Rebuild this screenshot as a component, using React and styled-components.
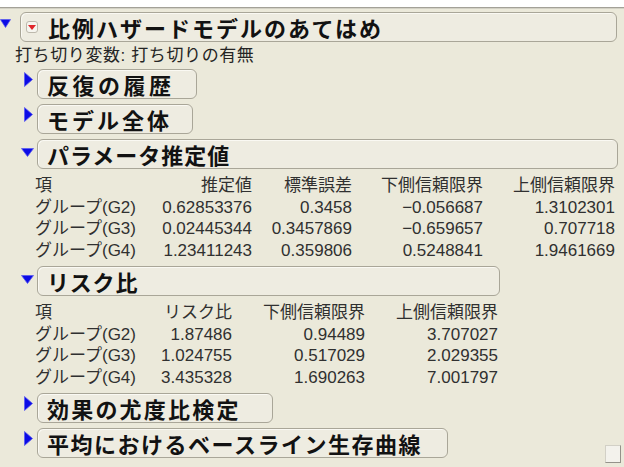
import React from "react";
import styled, { createGlobalStyle } from "styled-components";

const GlobalStyle = createGlobalStyle`
  html, body {
    margin: 0;
    padding: 0;
    background: #ebe9da;
  }
  body {
    font-family: "Noto Sans CJK JP", "Noto Sans", sans-serif;
    color: #2b2b2b;
  }
`;

const Window = styled.div`
  position: relative;
  min-height: 100vh;
  background: #ebe9da;
  overflow: hidden;
`;

const TopStrip = styled.div`
  height: 7px;
  background: #ffffff;
  border-bottom: 1px solid #a3a198;
  box-shadow: 0 1px 0 #d3d1c5;
`;

const Report = styled.div`
  padding-top: 4px;
`;

const Body = styled.div`
  padding-left: 15px;
`;

const OutlineRow = styled.div`
  display: flex;
  align-items: flex-start;
  margin-top: ${(p) => p.$gap}px;
  margin-left: ${(p) => p.$indent}px;
`;

const Toggle = styled.div`
  flex: none;
  width: 20px;
  height: 30px;
  box-sizing: border-box;
  display: flex;
  justify-content: ${(p) => (p.$edge ? "flex-start" : "center")};
  align-items: flex-start;
  padding-top: ${(p) => p.$top}px;
  padding-left: ${(p) => p.$left}px;
`;

const TitleBox = styled.div`
  box-sizing: border-box;
  width: ${(p) => p.$w}px;
  height: 30px;
  display: flex;
  align-items: center;
  gap: 10px;
  padding-left: ${(p) => p.$pad}px;
  border: 1px solid #a9a698;
  border-radius: 6px;
  background: #eeece1;
  box-shadow: inset 1px 1px 0 #faf9f3;
`;

const TitleText = styled.span`
  font-size: 22px;
  line-height: 1;
  font-weight: 700;
  letter-spacing: ${(p) => p.$ls ?? 1.6}px;
  color: #121212;
  white-space: nowrap;
`;

const MenuButton = styled.span`
  flex: none;
  width: 12px;
  height: 12px;
  box-sizing: border-box;
  border: 1px solid #bdb9ad;
  border-radius: 3px;
  background: #f6f5ef;
  display: flex;
  align-items: center;
  justify-content: center;
`;

const Subtitle = styled.div`
  margin-top: 4px;
  font-family: "Liberation Sans", "Noto Sans CJK JP", sans-serif;
  font-size: 17px;
  line-height: 20px;
  letter-spacing: 0.6px;
  color: #242424;
  white-space: nowrap;
`;

const Table = styled.div`
  display: grid;
  grid-template-columns: ${(p) => p.$cols};
  margin: 6px 0 0 20px;
  font-family: "Liberation Sans", "Noto Sans CJK JP", sans-serif;
  font-size: 17px;
  line-height: 21.5px;
  color: #303030;
`;

const Cell = styled.div`
  text-align: ${(p) => (p.$left ? "left" : "right")};
  white-space: nowrap;
`;

const SizeGrip = styled.div`
  position: absolute;
  right: 3px;
  bottom: 4px;
  width: 16px;
  height: 18px;
  box-sizing: border-box;
  background: #f3f2ec;
  border: 1px solid #d2d0c6;
  border-right-color: #94928a;
  border-bottom-color: #94928a;
`;

const BLUE = "#0c0ce6";

const Caret = ({ open, small }) =>
  open ? (
    <svg width={small ? 11 : 13} height="9" viewBox="0 0 13 9" preserveAspectRatio="none">
      <polygon points="0.5,0.5 12.5,0.5 6.5,8.5" fill={BLUE} stroke="#5a5af0" strokeWidth="0.8" />
    </svg>
  ) : (
    <svg width="9" height="15" viewBox="0 0 9 15">
      <polygon points="0.5,0.5 8.5,7.5 0.5,14.5" fill={BLUE} stroke="#5a5af0" strokeWidth="0.8" />
    </svg>
  );

const MenuGlyph = () => (
  <MenuButton>
    <svg width="8" height="5" viewBox="0 0 8 5">
      <polygon points="0,0 8,0 4,5" fill="#e0262b" />
    </svg>
  </MenuButton>
);

const Node = ({ title, open, width, ls }) => (
  <OutlineRow $gap={5} $indent={2}>
    <Toggle $top={open ? 9 : 3} $left={open ? 0 : 2}>
      <Caret open={open} />
    </Toggle>
    <TitleBox $w={width} $pad={9}>
      <TitleText $ls={ls}>{title}</TitleText>
    </TitleBox>
  </OutlineRow>
);

const DataTable = ({ cols, head, rows }) => (
  <Table $cols={cols}>
    {head.map((h, i) => (
      <Cell key={"h" + i} $left={i === 0}>
        {h}
      </Cell>
    ))}
    {rows.map((r, ri) =>
      r.map((c, ci) => (
        <Cell key={ri + "-" + ci} $left={ci === 0}>
          {c}
        </Cell>
      ))
    )}
  </Table>
);

const paramHead = ["項", "推定値", "標準誤差", "下側信頼限界", "上側信頼限界"];
const paramRows = [
  ["グループ(G2)", "0.62853376", "0.3458", "−0.056687", "1.3102301"],
  ["グループ(G3)", "0.02445344", "0.3457869", "−0.659657", "0.707718"],
  ["グループ(G4)", "1.23411243", "0.359806", "0.5248841", "1.9461669"],
];

const riskHead = ["項", "リスク比", "下側信頼限界", "上側信頼限界"];
const riskRows = [
  ["グループ(G2)", "1.87486", "0.94489", "3.707027"],
  ["グループ(G3)", "1.024755", "0.517029", "2.029355"],
  ["グループ(G4)", "3.435328", "1.690263", "7.001797"],
];

export default function App() {
  return (
    <>
      <GlobalStyle />
      <Window>
        <TopStrip />
        <Report>
          <OutlineRow $gap={0} $indent={0}>
            <Toggle $edge $top={7} $left={0}>
              <Caret open small />
            </Toggle>
            <TitleBox $w={597} $pad={5}>
              <MenuGlyph />
              <TitleText $ls={2}>比例ハザードモデルのあてはめ</TitleText>
            </TitleBox>
          </OutlineRow>
          <Body>
            <Subtitle>打ち切り変数: 打ち切りの有無</Subtitle>
            <OutlineRow $gap={3} $indent={2}>
              <Toggle $top={3} $left={2}>
                <Caret />
              </Toggle>
              <TitleBox $w={160} $pad={9}>
                <TitleText $ls={3.5}>反復の履歴</TitleText>
              </TitleBox>
            </OutlineRow>
            <Node title="モデル全体" width={156} ls={3} />
            <Node title="パラメータ推定値" open width={581} ls={1} />
            <DataTable
              cols="110px 107px 100px 131px 132px"
              head={paramHead}
              rows={paramRows}
            />
            <Node title="リスク比" open width={463} ls={0.8} />
            <DataTable cols="115px 82px 133px 133px" head={riskHead} rows={riskRows} />
            <Node title="効果の尤度比検定" width={236} ls={2.2} />
            <Node title="平均におけるベースライン生存曲線" width={411} ls={1.5} />
          </Body>
        </Report>
        <SizeGrip />
      </Window>
    </>
  );
}
